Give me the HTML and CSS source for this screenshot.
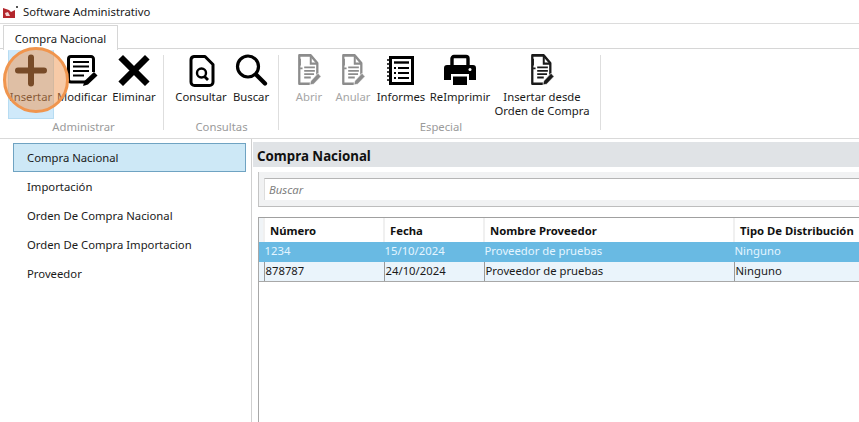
FILE: index.html
```html
<!DOCTYPE html>
<html lang="es">
<head>
<meta charset="utf-8">
<title>Software Administrativo</title>
<link rel="stylesheet" href="styles.css">
</head>
<body>
<svg width="0" height="0" class="defs">
  <defs>
    <g id="docpen" transform="translate(4 1) scale(.82 .96)">
      <path d="M4 1.500h14l8 8v13l-8 8.500H4z" fill="none" stroke="currentColor" stroke-width="2.800" stroke-linejoin="round"/>
      <path d="M18 2v8h8" fill="none" stroke="currentColor" stroke-width="2.400"/>
      <path d="M5 5v7M5 15h3" stroke="currentColor" stroke-width="2"/>
      <path d="M10 14h13M10 17.500h13M10 21h12M10 24.500h8" stroke="currentColor" stroke-width="1.900"/>
      <path d="M17 32l1-4 9-8 3.500 3.500-9 8z" fill="currentColor" stroke="#fff" stroke-width=".8"/>
    </g>
  </defs>
</svg>
<div class="app">
  <header class="titlebar">
    <svg class="logo" width="16" height="14" viewBox="0 0 16 14"><path d="M1 3l6 2 2 2 4-2v8H1z" fill="#b3262c"/><path d="M3 8l3-1 2 4H4z" fill="#f3d6d6"/><rect x="14" y="1" width="2" height="2" fill="#555"/></svg>
    <span class="apptitle">Software Administrativo</span>
  </header>
  <div class="tabs"><div class="tab">Compra Nacional</div></div>
  <section class="ribbon">
    <div class="group g-admin">
      <div class="buttons">
        <div class="btn w46 active">
          <svg class="ico" width="34" height="34" viewBox="0 0 34 34"><path d="M17 4.500v26M4 17.500h26" stroke="#000" stroke-width="6" stroke-linecap="round"/></svg>
          <span>Insertar</span>
        </div>
        <div class="btn w56">
          <svg class="ico" width="34" height="34" viewBox="0 0 34 34"><path d="M22 29H6a2.500 2.500 0 0 1-2.500-2.500V6A2.500 2.500 0 0 1 6 3.500h20A2.500 2.500 0 0 1 28.500 6v13" fill="none" stroke="#000" stroke-width="3"/><path d="M8 9h16M8 13.500h16M8 18h16M8 22.500h11" stroke="#000" stroke-width="2.200"/><path d="M18 33l1.500-5L29 19l3.500 3.500-9.500 9z" fill="#000"/></svg>
          <span>Modificar</span>
        </div>
        <div class="btn w48">
          <svg class="ico" width="34" height="34" viewBox="0 0 34 34"><path d="M6 6.500l22 22M28 6.500l-22 22" stroke="#000" stroke-width="6.500" stroke-linecap="square"/></svg>
          <span>Eliminar</span>
        </div>
      </div>
      <div class="glabel">Administrar</div>
    </div>
    <div class="group g-cons">
      <div class="buttons">
        <div class="btn w54">
          <svg class="ico" width="34" height="34" viewBox="0 0 34 34"><path d="M10 3.500h11l8 8V29a3.500 3.500 0 0 1-3.500 3.500h-15A3.500 3.500 0 0 1 7 29V7a3.500 3.500 0 0 1 3-3.500z" fill="none" stroke="#000" stroke-width="3" stroke-linejoin="round"/><circle cx="17.500" cy="20" r="4.500" fill="none" stroke="#000" stroke-width="2.400"/><path d="M20.500 23.500l3.500 3.500" stroke="#000" stroke-width="2.800"/></svg>
          <span>Consultar</span>
        </div>
        <div class="btn w46">
          <svg class="ico" width="34" height="34" viewBox="0 0 34 34"><circle cx="14" cy="13.500" r="10.500" fill="none" stroke="#000" stroke-width="3.200"/><path d="M22 21.500l9 9" stroke="#000" stroke-width="4.200" stroke-linecap="round"/></svg>
          <span>Buscar</span>
        </div>
      </div>
      <div class="glabel">Consultas</div>
    </div>
    <div class="group g-esp">
      <div class="buttons">
        <div class="btn w44 off">
          <svg class="ico" width="34" height="34" viewBox="0 0 34 34"><use href="#docpen"/></svg>
          <span>Abrir</span>
        </div>
        <div class="btn w44 off">
          <svg class="ico" width="34" height="34" viewBox="0 0 34 34"><use href="#docpen"/></svg>
          <span>Anular</span>
        </div>
        <div class="btn w52">
          <svg class="ico" width="34" height="34" viewBox="0 0 34 34"><rect x="5" y="3" width="25" height="29" fill="#000"/><rect x="8" y="6" width="19" height="23" fill="#fff"/><path d="M3 7h4M3 11h4M3 15h4M3 19h4M3 23h4M3 27h4" stroke="#000" stroke-width="1.500"/><path d="M10 9.500h15" stroke="#000" stroke-width="2.400"/><path d="M10 15h2M10 20h2M10 25h2M14 15h11M14 20h11M14 25h11" stroke="#000" stroke-width="2"/></svg>
          <span>Informes</span>
        </div>
        <div class="btn w66">
          <svg class="ico" width="34" height="34" viewBox="0 0 34 34"><path d="M9 12V5.500A2 2 0 0 1 11 3.500h12a2 2 0 0 1 2 2V12" fill="none" stroke="#000" stroke-width="3.400"/><path d="M4 12h26a3 3 0 0 1 3 3v12h-7v-6H8v6H1V15a3 3 0 0 1 3-3z" fill="#000"/><path d="M10 23.500h14V32H10z" fill="#000"/><circle cx="27" cy="16.500" r="1.500" fill="#fff"/></svg>
          <span>ReImprimir</span>
        </div>
        <div class="btn w98">
          <svg class="ico" width="34" height="34" viewBox="0 0 34 34"><use href="#docpen"/></svg>
          <span>Insertar desde<br>Orden de Compra</span>
        </div>
      </div>
      <div class="glabel">Especial</div>
    </div>
  </section>
  <div class="content">
    <nav class="sidebar">
      <div class="navitem selected">Compra Nacional</div>
      <div class="navitem">Importación</div>
      <div class="navitem">Orden De Compra Nacional</div>
      <div class="navitem">Orden De Compra Importacion</div>
      <div class="navitem">Proveedor</div>
    </nav>
    <main class="main">
      <h1 class="heading">Compra Nacional</h1>
      <div class="searchwrap"><div class="searchbox">Buscar</div></div>
      <div class="grid">
        <table>
          <colgroup><col class="c0"><col class="c1"><col class="c2"><col class="c3"><col class="c4"></colgroup>
          <thead>
            <tr><th class="gutter"></th><th>Número</th><th>Fecha</th><th>Nombre Proveedor</th><th>Tipo De Distribución</th></tr>
          </thead>
          <tbody>
            <tr class="rowsel"><td class="gutter"></td><td>1234</td><td>15/10/2024</td><td>Proveedor de pruebas</td><td>Ninguno</td></tr>
            <tr class="rowalt"><td class="gutter"></td><td>878787</td><td>24/10/2024</td><td>Proveedor de pruebas</td><td>Ninguno</td></tr>
          </tbody>
        </table>
      </div>
    </main>
  </div>
  <div class="spot"></div>
</div>
</body>
</html>
```

FILE: styles.css
```css
* { box-sizing: border-box; }
html, body { margin: 0; height: 100%; overflow: hidden; background: #fff; }
body { font-family: "Noto Sans", "Open Sans", sans-serif; font-size: 11.3px; color: #1a1a1a; }
.defs { position: absolute; }
.app { position: relative; width: 859px; height: 422px; overflow: hidden; display: flex; flex-direction: column; }

.titlebar { height: 24px; display: flex; align-items: center; padding-left: 2px; gap: 5px; border-bottom: 1px solid #dcdcdc; }
.logo { flex: none; }

.tabs { height: 25px; padding: 1px 0 0 3px; border-bottom: 1px solid #d6d6d6; display: flex; }
.tab { width: 115px; height: 25px; border: 1px solid #d6d6d6; border-bottom: 0; background: #fff; text-align: center; line-height: 26px; border-radius: 1px 1px 0 0; }

.ribbon { height: 90px; display: flex; border-bottom: 1px solid #d9d9d9; flex: none; }
.group { display: flex; flex-direction: column; position: relative; }
.group::after { content: ""; position: absolute; right: 0; top: 6px; bottom: 8px; width: 1px; background: #dedede; }
.g-admin { width: 164px; padding-left: 8px; }
.g-cons { width: 115px; padding-left: 10px; }
.g-esp { width: 322px; padding-left: 8px; }
.buttons { display: flex; height: 69px; margin-top: 1px; }
.glabel { text-align: center; color: #9b9b9b; line-height: 16px; }
.g-admin .glabel { margin-left: -5px; }
.g-cons .glabel { margin-left: -10px; }
.g-esp .glabel { margin-left: -6px; }

.btn { display: flex; flex-direction: column; align-items: center; text-align: center; line-height: 14px; padding-top: 3px; flex: none; white-space: nowrap; }
.ico { display: block; margin-bottom: 2.500px; flex: none; }
.off { color: #a6a6a6; }
.off .ico { color: #8c8c8c; }
.active { background: #cfe9fa; border: 1px solid #b7dcf2; border-top-color: #cfe9fa; padding-top: 2px; }
.w44 { width: 44px; }
.w46 { width: 46px; }
.w48 { width: 48px; }
.w52 { width: 52px; }
.w54 { width: 54px; }
.w56 { width: 56px; }
.w66 { width: 66px; }
.w98 { width: 98px; }

.content { flex: 1; display: flex; min-height: 0; }
.sidebar { width: 252px; flex: none; border-right: 1px solid #d0d0d0; padding: 4px 5px 0 13px; }
.navitem { height: 29px; line-height: 29px; padding-left: 14px; }
.selected { background: #cde8f6; border: 1px solid #6fa3c2; line-height: 27px; padding-left: 13px; }

.main { flex: 1; min-width: 0; padding-top: 3px; padding-left: 1px; }
.heading { margin: 0; height: 25px; background: #e0e3e6; font-size: 13.300px; font-weight: 700; line-height: 29px; padding-left: 4px; color: #111; }
.searchwrap { margin: 5px 0 0 5px; height: 35px; background: #f1f2f3; border-left: 1px solid #c4c4c4; border-bottom: 1px solid #bdbdbd; padding: 6px 0 6px 5px; }
.searchbox { height: 22px; background: #fff; border-top: 1px solid #b5b5b5; border-left: 1px solid #dddddd; color: #808080; font-style: italic; line-height: 21px; padding-left: 4px; }
.grid { margin: 10px 0 0 5px; height: 220px; border-left: 1px solid #a8a8a8; border-top: 1px solid #a0a0a0; }
table { border-collapse: collapse; table-layout: fixed; width: 601px; }
.c0 { width: 5px; }
.c1 { width: 120px; }
.c2 { width: 100px; }
.c3 { width: 250px; }
.c4 { width: 126px; }
th { height: 24px; padding: 0 0 0 5px; text-align: left; font-weight: 700; color: #111; background: #fff; border-left: 2px solid #f0f0f0; white-space: nowrap; }
th.gutter, td.gutter { background: #f0f4f7; border: 0; padding: 0; }
td { white-space: nowrap; border-left: 1px solid #9a9a9a; }
.rowsel td { height: 20px; padding: 0 0 3px 0; background: #69bae3; color: #e4f5ff; border-left-color: #69bae3; }
.rowalt td { height: 19px; padding: 0 0 1px 1px; background: #eaf4fb; border-bottom: 1px solid #a8a8a8; }

.spot { position: absolute; left: 3px; top: 47px; width: 66px; height: 66px; border-radius: 50%; background: rgba(240, 150, 80, .5); border: 3px solid #f0954e; }
```
